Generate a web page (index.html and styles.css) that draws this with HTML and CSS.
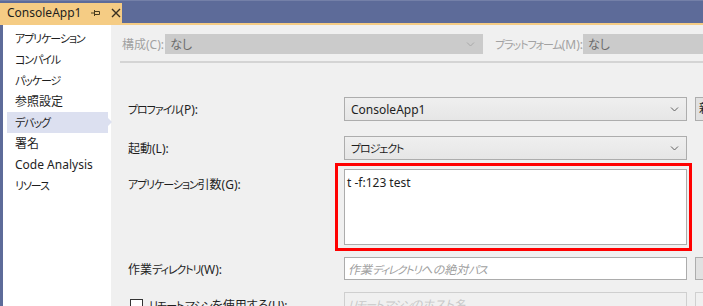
FILE: index.html
```html
<!DOCTYPE html>
<html lang="ja">
<head>
<meta charset="utf-8">
<link rel="stylesheet" href="styles.css">
</head>
<body>
<div class="window">
  <div class="titlebar">
    <div class="tab">
      <span class="tab-title">ConsoleApp1</span>
      <svg class="pin" width="9" height="8" viewBox="0 0 9 8"><path d="M0 4H3M3.5 1V7M3.5 2.5H8.5V5.5H3.5" fill="none" stroke="#4a3c1e" stroke-width="1"/></svg>
      <svg class="close" width="10" height="10" viewBox="0 0 10 10"><path d="M1 1L9 9M9 1L1 9" stroke="#3a3020" stroke-width="1.4" fill="none"/></svg>
    </div>
  </div>
  <div class="accent"></div>
  <div class="main">
    <nav class="sidebar">
      <div class="nav-item"><span class="k">アプリケーション</span></div>
      <div class="nav-item"><span class="k">コンパイル</span></div>
      <div class="nav-item"><span class="k">パッケージ</span></div>
      <div class="nav-item">参照設定</div>
      <div class="nav-item selected"><span class="k">デバッグ</span></div>
      <div class="nav-item">署名</div>
      <div class="nav-item">Code Analysis</div>
      <div class="nav-item"><span class="k">リソース</span></div>
    </nav>
    <section class="content">
      <div class="config-row">
        <span class="dim-label cfg-label">構成(C):</span>
        <div class="combo disabled cfg-combo"><span>なし</span><svg class="chev" width="9" height="5" viewBox="0 0 9 5"><path d="M1 0.5L4.5 4L8 0.5" fill="none" stroke="#a8a8a8" stroke-width="1"/></svg></div>
        <span class="dim-label plat-label"><span class="k">プラットフォーム</span>(M):</span>
        <div class="combo disabled plat-combo"><span>なし</span></div>
      </div>
      <div class="separator"></div>
      <div class="form">
        <div class="row row-profile">
          <label class="label"><span class="k">プロファイル</span>(P):</label>
          <div class="combo field"><span>ConsoleApp1</span><svg class="chev" width="9" height="5" viewBox="0 0 9 5"><path d="M1 0.5L4.5 4L8 0.5" fill="none" stroke="#606060" stroke-width="1"/></svg></div>
          <div class="side-btn"><span>新</span></div>
        </div>
        <div class="row row-launch">
          <label class="label">起動(L):</label>
          <div class="combo field"><span class="k">プロジェクト</span><svg class="chev" width="9" height="5" viewBox="0 0 9 5"><path d="M1 0.5L4.5 4L8 0.5" fill="none" stroke="#606060" stroke-width="1"/></svg></div>
        </div>
        <div class="row row-args">
          <label class="label top"><span class="k">アプリケーション</span>引数(G):</label>
          <div class="args-wrap">
            <div class="textarea">t -f:123 test</div>
            <span class="highlight"></span>
          </div>
        </div>
        <div class="row row-dir">
          <label class="label">作業<span class="k">ディレクトリ</span>(W):</label>
          <div class="textbox field"><span class="placeholder">作業<span class="k">ディレクトリ</span>への絶対<span class="k">パス</span></span></div>
          <div class="side-btn plain"></div>
        </div>
        <div class="row row-remote">
          <label class="label check-label"><span class="checkbox"></span><span><span class="k">リモート マシン</span>を使用する(U):</span></label>
          <div class="textbox field disabled-box"><span class="placeholder faint"><span class="k">リモート マシン</span>のホスト名</span></div>
          <div class="side-btn plain faint-btn"></div>
        </div>
      </div>
    </section>
  </div>
</div>
</body>
</html>
```
FILE: styles.css
```css
* { box-sizing: border-box; }
html, body { margin: 0; padding: 0; }
body {
  width: 703px;
  height: 306px;
  overflow: hidden;
  font-family: "Noto Sans", "Noto Sans CJK JP", sans-serif;
  font-feature-settings: "palt";
  font-size: 12px;
  color: #1e1e1e;
  background: #f0f0f0;
}
.k { font-size: 11px; letter-spacing: -1.1px; }
.window { width: 703px; height: 306px; display: flex; flex-direction: column; }
.titlebar {
  height: 23px;
  background: #5d6b99;
  border-top: 1px solid #7480a8;
  display: flex;
  align-items: flex-end;
}
.tab {
  width: 122px;
  height: 20px;
  background: #f5cc84;
  display: flex;
  align-items: center;
  padding-left: 7px;
}
.tab-title { width: 84px; color: #1e1e1e; line-height: 20px; }
.close { margin-left: 11px; }
.accent { height: 2px; background: #f5cc84; }
.main { flex: 1; display: flex; border-left: 3px solid #5d6b99; min-height: 0; }
.sidebar { width: 108px; background: #ffffff; padding-top: 3px; }
.nav-item {
  height: 21px;
  line-height: 21px;
  margin-left: 4px;
  margin-right: 3px;
  padding-left: 8px;
  color: #1e1e1e;
  position: relative;
  white-space: nowrap;
}
.nav-item.selected { background: #dce0f0; }
.nav-item.selected::after {
  content: "";
  position: absolute;
  right: -4px;
  top: 6px;
  border-left: 4px solid #dce0f0;
  border-top: 4px solid transparent;
  border-bottom: 4px solid transparent;
}
.content { flex: 1; background: #f0f0f0; min-width: 0; overflow: hidden; }
.config-row {
  margin-top: 9px;
  height: 20px;
  display: flex;
  align-items: center;
  padding-left: 11px;
  white-space: nowrap;
}
.dim-label { color: #a2a2a2; }
.cfg-label { width: 48px; }
.combo {
  height: 24px;
  display: flex;
  align-items: center;
  justify-content: space-between;
  padding: 0 7px 0 6px;
  border: 1px solid #adadad;
  background: linear-gradient(#efefef, #e6e6e6);
  color: #1e1e1e;
  flex-shrink: 0;
}
.combo.disabled {
  height: 20px;
  border-color: #cbcbcb;
  background: #cbcbcb;
  color: #6a6a6a;
  padding-left: 4px;
}
.cfg-combo { width: 318px; }
.plat-label { margin-left: 12px; width: 95px; }
.plat-combo { width: 120px; }
.separator { margin: 7px 0 0 9px; height: 2px; background: #d4d4d4; }
.form { margin-top: 34px; padding-left: 17px; display: flex; flex-direction: column; }
.row { display: flex; align-items: center; white-space: nowrap; }
.label { width: 216px; flex-shrink: 0; color: #1e1e1e; }
.label.top { align-self: flex-start; padding-top: 6px; }
.field { width: 343px; flex-shrink: 0; }
.row-profile { height: 24px; }
.row-launch { height: 24px; margin-top: 15px; }
.row-args { margin-top: 9px; }
.row-dir { height: 23px; margin-top: 12px; }
.row-remote { height: 23px; margin-top: 12px; align-items: flex-start; }
.side-btn {
  margin-left: 8px;
  width: 24px;
  height: 24px;
  border: 1px solid #adadad;
  background: #e1e1e1;
  flex-shrink: 0;
  padding-left: 3px;
  line-height: 22px;
  overflow: hidden;
}
.side-btn.plain { height: 23px; }
.side-btn.faint-btn { border-color: #d0d0d0; background: #f0f0f0; }
.args-wrap { position: relative; width: 343px; height: 76px; flex-shrink: 0; }
.textarea {
  width: 343px;
  height: 76px;
  background: #ffffff;
  border: 1px solid #acacac;
  padding: 5px 2px;
  line-height: 16px;
}
.highlight {
  position: absolute;
  left: -9px;
  right: -5px;
  top: -6px;
  bottom: -6px;
  border: 3px solid #ff0000;
  pointer-events: none;
}
.textbox {
  height: 23px;
  background: #ffffff;
  border: 1px solid #acacac;
  display: flex;
  align-items: center;
  padding-left: 3px;
}
.placeholder { color: #a0a0a0; font-style: italic; }
.disabled-box { background: #f0f0f0; border-color: #cfcfcf; }
.placeholder.faint { color: #c8c8c8; }
.check-label { display: flex; align-items: center; padding-top: 4px; }
.checkbox {
  width: 13px;
  height: 13px;
  border: 1px solid #333333;
  background: #ffffff;
  margin-left: 2px;
  margin-right: 6px;
}
```
